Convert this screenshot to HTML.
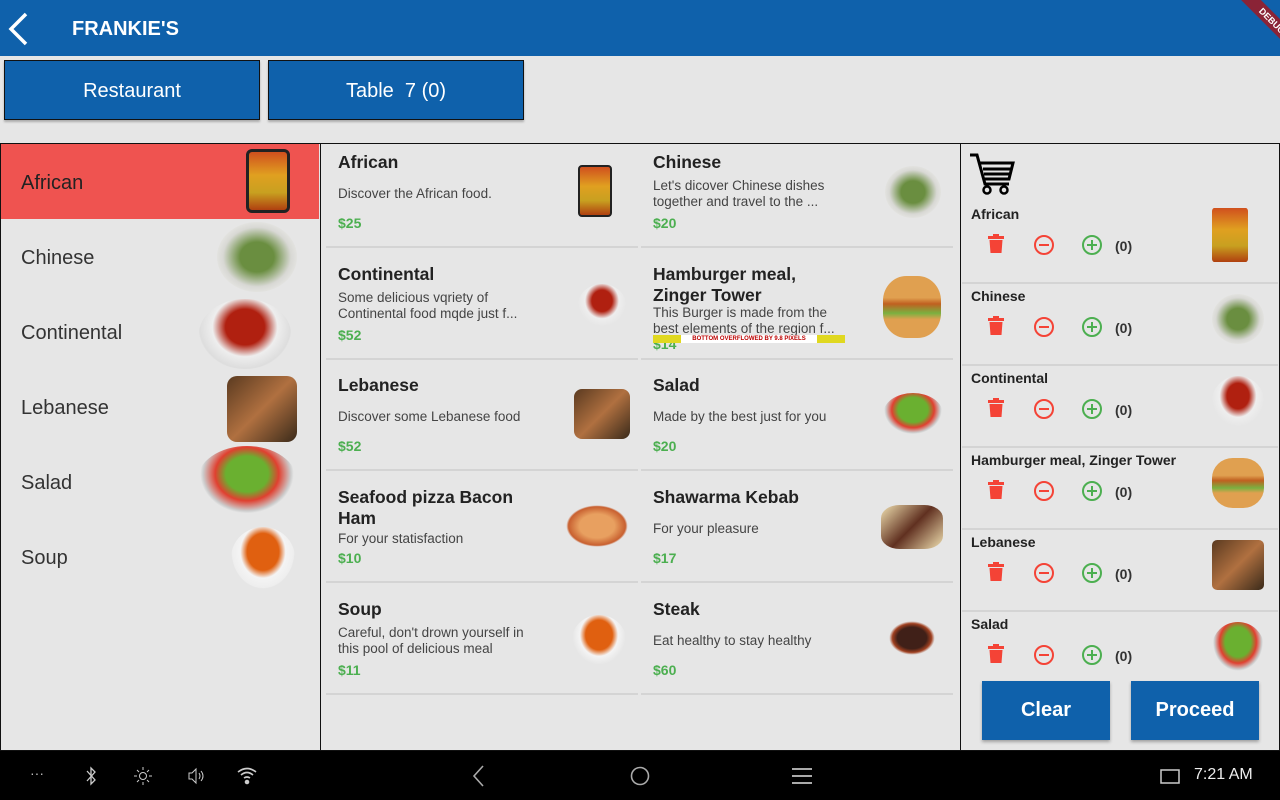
<!DOCTYPE html>
<html><head><meta charset="utf-8"><style>
*{box-sizing:border-box;margin:0;padding:0}
body{width:1280px;height:800px;overflow:hidden;background:#e6e6e6;font-family:"Liberation Sans",sans-serif;position:relative;color:#222}
.abs{position:absolute}
.bar{left:0;top:0;width:1280px;height:56px;background:#0f61ab}
.btn{background:#0f61ab;color:#fff;border:1px solid #111;font-size:20px;display:flex;align-items:center;justify-content:center;box-shadow:0 2px 2px rgba(0,0,0,.25)}
.panel{top:143px;height:608px;border:1px solid #111;border-left-width:1px}
.lrow{position:absolute;left:0;width:318px;height:75px;font-size:20px;padding-left:20px;padding-top:4px;display:flex;align-items:center;color:#333}
.cell{position:absolute;width:312px;height:104px;border-bottom:2px solid #d4d4d4}
.cell h3{position:absolute;left:12px;top:8px;font-size:17.5px;font-weight:bold;color:#222;line-height:21px;width:205px}
.cell p{position:absolute;left:12px;font-size:13.5px;color:#444;line-height:16px;width:195px}
.cell .pr{position:absolute;left:12px;font-size:14px;font-weight:bold;color:#4caf50}
.img{position:absolute;border-radius:50%}
.ri{position:absolute;left:1px;width:316px;height:82px;border-bottom:2px solid #d4d4d4}
.ri b{position:absolute;left:9px;top:4px;font-size:14px;color:#222}
.ri .ic{position:absolute;top:32px}
.ri .cnt{position:absolute;left:153px;top:36px;font-size:14px;font-weight:bold;color:#333}
.big{position:absolute;top:681px;width:128px;height:59px;background:#0f61ab;color:#fff;font-weight:bold;font-size:20px;display:flex;align-items:center;justify-content:center;box-shadow:0 2px 3px rgba(0,0,0,.3)}
.nav{left:0;top:751px;width:1280px;height:49px;background:#000}
</style></head><body>
<div class="abs bar"></div>
<svg class="abs" style="left:6px;top:12px" width="24" height="34" viewBox="0 0 24 34"><path d="M20 2 L5 17 L20 32" stroke="#fff" stroke-width="3.5" fill="none"/></svg>
<div class="abs" style="left:72px;top:18px;color:#fff;font-weight:bold;font-size:20px">FRANKIE'S</div>
<div class="abs" style="left:1218px;top:0;width:62px;height:56px;overflow:hidden"><div style="position:absolute;left:14px;top:14px;width:80px;height:14px;background:#8a2336;transform:rotate(45deg);color:#fff;font-size:9px;font-weight:bold;text-align:center;line-height:14px">DEBUG</div></div>
<div class="abs btn" style="left:4px;top:60px;width:256px;height:60px;padding-top:2px">Restaurant</div>
<div class="abs btn" style="left:268px;top:60px;width:256px;height:60px;padding-top:2px">Table&nbsp;&nbsp;7 (0)</div>

<div class="abs panel" style="left:0;width:321px">
<div class="lrow" style="top:0;background:#ef5350;color:#222">African</div>
<div class="lrow" style="top:75px">Chinese</div>
<div class="lrow" style="top:150px">Continental</div>
<div class="lrow" style="top:225px">Lebanese</div>
<div class="lrow" style="top:300px">Salad</div>
<div class="lrow" style="top:375px">Soup</div>
<div class="img" style="left:245px;top:5px;width:44px;height:64px;border-radius:6px;background:linear-gradient(#d0501e,#e0a020 40%,#c8a020 70%,#b04010);border:3px solid #222"></div>
<div class="img" style="left:216px;top:78px;width:80px;height:70px;background:radial-gradient(#6a8e40 30%,#d8d8d4 60%,#fff)"></div>
<div class="img" style="left:198px;top:155px;width:92px;height:70px;background:radial-gradient(ellipse at 50% 40%,#b02010 30%,#eee 50%,#ddd 70%,transparent 72%)"></div>
<div class="img" style="left:226px;top:232px;width:70px;height:66px;border-radius:10px;background:linear-gradient(135deg,#5a3a20,#b07040 50%,#3a2a1a)"></div>
<div class="img" style="left:196px;top:302px;width:100px;height:70px;background:radial-gradient(ellipse at 50% 40%,#6ab030 30%,#e04030 45%,#ccc 62%,transparent 66%)"></div>
<div class="img" style="left:230px;top:383px;width:64px;height:62px;background:radial-gradient(ellipse at 50% 40%,#e06010 35%,#f4f4f4 50%,#eee 68%,transparent 70%)"></div>
</div>

<div class="abs panel" style="left:320px;width:641px;border-left:none">
<div class="cell" style="left:6px;top:0"><h3>African</h3><p style="top:42px">Discover the African food.</p><div class="pr" style="top:71px">$25</div><div class="img" style="left:252px;top:21px;width:34px;height:52px;border-radius:4px;background:linear-gradient(#d0501e,#e0a020 40%,#c8a020 70%,#b04010);border:2px solid #222"></div></div>
<div class="cell" style="left:321px;top:0"><h3>Chinese</h3><p style="top:34px">Let's dicover Chinese dishes together and travel to the ...</p><div class="pr" style="top:71px">$20</div><div class="img" style="left:244px;top:22px;width:56px;height:52px;background:radial-gradient(#6a8e40 30%,#d8d8d4 60%,#fff)"></div></div>
<div class="cell" style="left:6px;top:112px"><h3>Continental</h3><p style="top:34px">Some delicious vqriety of Continental food mqde just f...</p><div class="pr" style="top:71px">$52</div><div class="img" style="left:252px;top:28px;width:48px;height:42px;background:radial-gradient(ellipse at 50% 40%,#b02010 30%,#eee 50%,transparent 72%)"></div></div>
<div class="cell" style="left:321px;top:112px"><h3>Hamburger meal,<br>Zinger Tower</h3><p style="top:49px">This Burger is made from the best elements of the region f...</p><div class="pr" style="top:80px">$14</div><div style="position:absolute;left:12px;top:79px;width:192px;height:8px;background:#fff;font-size:6px;font-weight:bold;color:#b00;text-align:center;line-height:8px;border-left:28px solid #e0d820;border-right:28px solid #e0d820">BOTTOM OVERFLOWED BY 9.8 PIXELS</div><div class="img" style="left:242px;top:20px;width:58px;height:62px;border-radius:40%;background:linear-gradient(#e0a050 35%,#c06020 45%,#7ab040 60%,#e0a050 70%)"></div></div>
<div class="cell" style="left:6px;top:223px"><h3>Lebanese</h3><p style="top:42px">Discover some Lebanese food</p><div class="pr" style="top:71px">$52</div><div class="img" style="left:248px;top:22px;width:56px;height:50px;border-radius:8px;background:linear-gradient(135deg,#5a3a20,#b07040 50%,#3a2a1a)"></div></div>
<div class="cell" style="left:321px;top:223px"><h3>Salad</h3><p style="top:42px">Made by the best just for you</p><div class="pr" style="top:71px">$20</div><div class="img" style="left:242px;top:26px;width:60px;height:42px;background:radial-gradient(ellipse at 50% 40%,#6ab030 35%,#e04030 50%,#ccc 64%,transparent 68%)"></div></div>
<div class="cell" style="left:6px;top:335px"><h3>Seafood pizza Bacon Ham</h3><p style="top:52px">For your statisfaction</p><div class="pr" style="top:71px">$10</div><div class="img" style="left:240px;top:26px;width:62px;height:42px;background:radial-gradient(#e8a060 40%,#c86030 65%,transparent 70%)"></div></div>
<div class="cell" style="left:321px;top:335px"><h3>Shawarma Kebab</h3><p style="top:42px">For your pleasure</p><div class="pr" style="top:71px">$17</div><div class="img" style="left:240px;top:26px;width:62px;height:44px;border-radius:30%;background:linear-gradient(135deg,#f0e0b0,#603020 50%,#f0e0b0)"></div></div>
<div class="cell" style="left:6px;top:447px"><h3>Soup</h3><p style="top:34px">Careful, don't drown yourself in this pool of delicious meal</p><div class="pr" style="top:71px">$11</div><div class="img" style="left:246px;top:24px;width:54px;height:50px;background:radial-gradient(ellipse at 50% 40%,#e06010 35%,#f4f4f4 50%,transparent 70%)"></div></div>
<div class="cell" style="left:321px;top:447px"><h3>Steak</h3><p style="top:42px">Eat healthy to stay healthy</p><div class="pr" style="top:71px">$60</div><div class="img" style="left:248px;top:30px;width:46px;height:34px;background:radial-gradient(#402018 45%,#a04020 60%,transparent 70%)"></div></div>
</div>

<div class="abs panel" style="left:960px;width:320px">
<svg style="position:absolute;left:8px;top:9px" width="46" height="44" viewBox="0 0 46 44"><path d="M1 2 L8 2 L16 31 L40 31" stroke="#000" stroke-width="3" fill="none"/><path d="M11 10 L44 10 L40 26 L15 26" stroke="#000" stroke-width="3" fill="none"/><path d="M14 16 L42 16 M15 21 L41 21" stroke="#000" stroke-width="3"/><circle cx="18" cy="37" r="3.5" stroke="#000" stroke-width="2.5" fill="none"/><circle cx="35" cy="37" r="3.5" stroke="#000" stroke-width="2.5" fill="none"/></svg>
<div id="ris"></div>
<div class="big" style="left:21px;top:537px">Clear</div>
<div class="big" style="left:170px;top:537px">Proceed</div>
</div>

<div class="abs nav"></div>
<div class="abs" style="left:30px;top:765px;color:#bbb;font-size:14px">···</div>
<svg class="abs" style="left:84px;top:766px" width="14" height="20" viewBox="0 0 14 20" stroke="#ccc" fill="none" stroke-width="1.3"><path d="M3 5 L11 14 L7 18 L7 2 L11 6 L3 15"/></svg>
<svg class="abs" style="left:133px;top:766px" width="20" height="20" viewBox="0 0 20 20" stroke="#ccc" fill="none"><circle cx="10" cy="10" r="3.5"/><path d="M10 1v3M10 16v3M1 10h3M16 10h3M4 4l2 2M14 14l2 2M4 16l2-2M14 6l2-2"/></svg>
<svg class="abs" style="left:186px;top:766px" width="20" height="20" viewBox="0 0 20 20" stroke="#ccc" fill="none"><path d="M3 7h3l4-4v14l-4-4H3z M13 7q2 3 0 6 M15 5q4 5 0 10"/></svg>
<svg class="abs" style="left:236px;top:766px" width="22" height="20" viewBox="0 0 22 20" stroke="#ccc" fill="none" stroke-width="1.6"><path d="M2 6q9-7 18 0M5 9q6-5 12 0M8 12q3-2 6 0"/><circle cx="11" cy="16" r="1.5" fill="#ccc"/></svg>
<svg class="abs" style="left:470px;top:765px" width="16" height="22" viewBox="0 0 16 22"><path d="M13 1 L4 11 L13 21" stroke="#aaa" stroke-width="1.6" fill="none"/></svg>
<svg class="abs" style="left:629px;top:765px" width="22" height="22"><circle cx="11" cy="11" r="8.5" stroke="#aaa" stroke-width="1.6" fill="none"/></svg>
<svg class="abs" style="left:791px;top:767px" width="22" height="18"><path d="M1 2h20M1 9h20M1 16h20" stroke="#aaa" stroke-width="2"/></svg>
<svg class="abs" style="left:1159px;top:768px" width="22" height="18"><rect x="2" y="2" width="18" height="13" stroke="#ccc" stroke-width="1.5" fill="none"/></svg>
<div class="abs" style="left:1194px;top:766px;color:#eee;font-size:16px">7:21 AM</div>

<script>
var d=[["African","linear-gradient(#d0501e,#e0a020 40%,#c8a020 70%,#b04010)",6],["Chinese","radial-gradient(#6a8e40 30%,#d8d8d4 60%,#fff)",50],["Continental","radial-gradient(ellipse at 50% 40%,#b02010 30%,#eee 50%,transparent 72%)",50],["Hamburger meal, Zinger Tower","linear-gradient(#e0a050 35%,#c06020 45%,#7ab040 60%,#e0a050 70%)",40],["Lebanese","linear-gradient(135deg,#5a3a20,#b07040 50%,#3a2a1a)",10],["Salad","radial-gradient(ellipse at 50% 40%,#6ab030 35%,#e04030 50%,#ccc 64%,transparent 68%)",50]];
var h="";d.forEach(function(x,i){var t=58+i*82;
h+='<div class="ri" style="top:'+t+'px'+(i==5?';border-bottom:none':'')+'"><b>'+x[0]+'</b>'+
'<svg class="ic" style="left:26px" width="16" height="20" viewBox="0 0 16 20"><rect x="0" y="2" width="16" height="3" fill="#f44336"/><rect x="5" y="0" width="6" height="3" fill="#f44336"/><path d="M1.5 6h13l-1 13h-11z" fill="#f44336"/></svg>'+
'<svg class="ic" style="left:71px" width="22" height="22"><circle cx="11" cy="11" r="9" stroke="#f44336" stroke-width="2" fill="none"/><path d="M6 11h10" stroke="#f44336" stroke-width="2"/></svg>'+
'<svg class="ic" style="left:119px" width="22" height="22"><circle cx="11" cy="11" r="9" stroke="#4caf50" stroke-width="2" fill="none"/><path d="M6 11h10M11 6v10" stroke="#4caf50" stroke-width="2"/></svg>'+
'<span class="cnt">(0)</span><div class="img" style="left:250px;top:'+(i==0?6:10)+'px;width:'+(i==0?36:52)+'px;height:'+(i==0?54:50)+'px;border-radius:'+x[2]+'%;background:'+x[1]+'"></div></div>';});
document.getElementById('ris').innerHTML=h;
</script>
</body></html>
